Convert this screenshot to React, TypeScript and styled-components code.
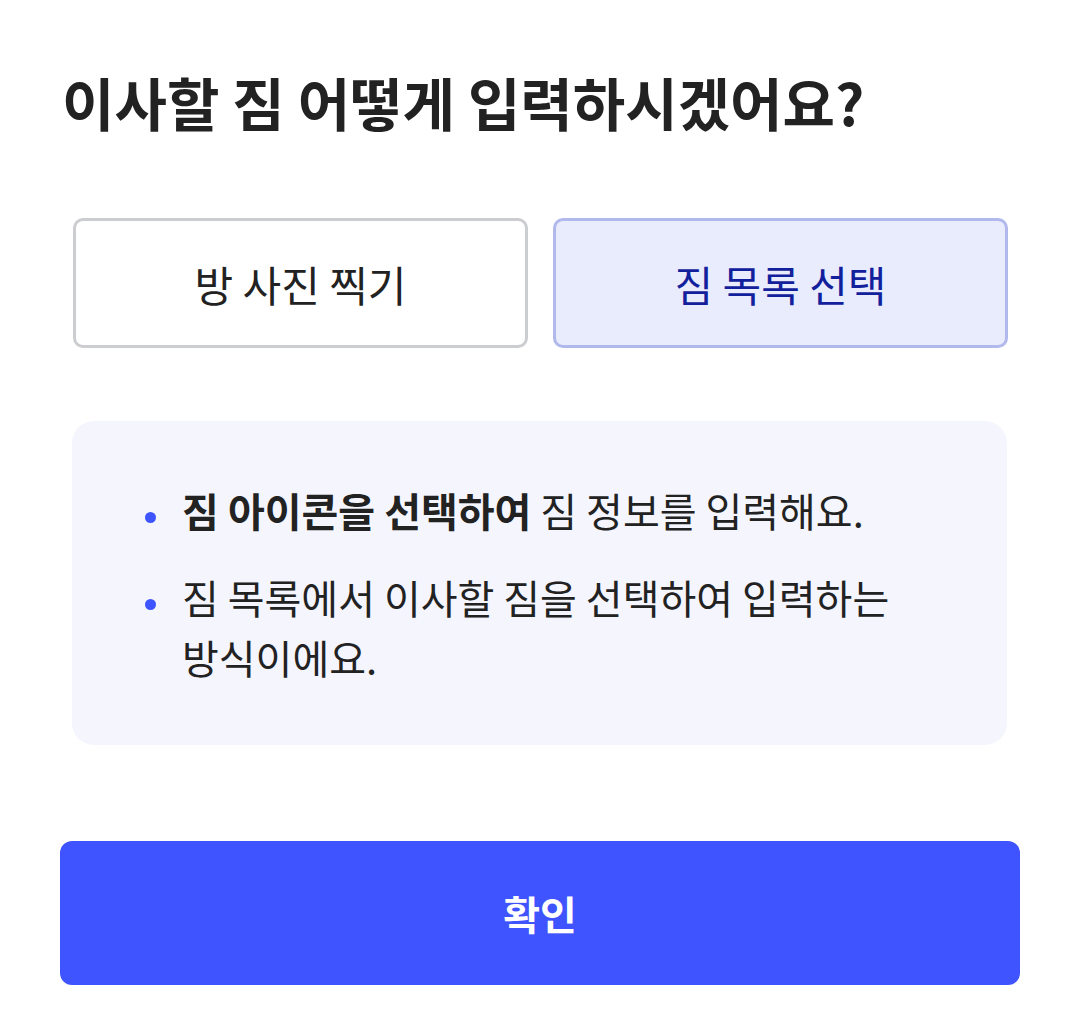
import { useState } from "react";
import styled, { createGlobalStyle } from "styled-components";

const GlobalStyle = createGlobalStyle`
    body {
        margin: 0;
        background: #ffffff;
        font-family: "Noto Sans CJK KR", "Noto Sans", sans-serif;
        color: #222222;
        word-break: keep-all;
    }
`

type Method = "photo" | "list";

export default function App() {
    const [method, setMethod] = useState<Method>("list");

    return (
        <>
            <GlobalStyle />
            <Sheet>
                <Title>이사할 짐 어떻게 입력하시겠어요?</Title>

                <OptionRow>
                    <OptionButton type="button" $active={method === "photo"} onClick={() => setMethod("photo")}>
                        방 사진 찍기
                    </OptionButton>
                    <OptionButton type="button" $active={method === "list"} onClick={() => setMethod("list")}>
                        짐 목록 선택
                    </OptionButton>
                </OptionRow>

                <InfoBox>
                    <InfoItem>
                        <Dot />
                        <p><strong>짐 아이콘을 선택하여</strong> 짐 정보를 입력해요.</p>
                    </InfoItem>
                    <InfoItem>
                        <Dot />
                        <p>짐 목록에서 이사할 짐을 선택하여 입력하는 방식이에요.</p>
                    </InfoItem>
                </InfoBox>

                <ConfirmButton type="button">확인</ConfirmButton>
            </Sheet>
        </>
    );
}

const Sheet = styled.div`
    display: flex;
    flex-direction: column;
    padding: 67px 60px 48px;
`
const Title = styled.h1`
    margin: 0 0 0 2px;
    font-size: 57px;
    line-height: 68px;
    font-weight: 700;
    color: #222222;
`
const OptionRow = styled.div`
    display: grid;
    grid-template-columns: 1fr 1fr;
    gap: 25px;
    margin: 83px 12px 0 13px;
`
const OptionButton = styled.button<{ $active: boolean }>`
    height: 130px;
    border-radius: 10px;
    border: 3px solid ${(p) => (p.$active ? "#b1b9ec" : "#cccdd0")};
    background: ${(p) => (p.$active ? "#e9ecfd" : "#ffffff")};
    color: ${(p) => (p.$active ? "#13209c" : "#222222")};
    font-family: inherit;
    font-size: 42px;
    font-weight: 400;
    cursor: pointer;
    padding: 0;
`
const InfoBox = styled.ul`
    list-style: none;
    margin: 73px 13px 0 12px;
    padding: 59px 70px 58px 73px;
    background: #f4f5fd;
    border-radius: 22px;
    display: flex;
    flex-direction: column;
    gap: 27px;
`
const InfoItem = styled.li`
    display: flex;
    align-items: flex-start;
    gap: 26px;
    p {
        margin: 0;
        font-size: 40px;
        line-height: 60px;
        color: #222222;
    }
    strong {
        font-weight: 700;
    }
`
const Dot = styled.span`
    flex: none;
    width: 11px;
    height: 11px;
    border-radius: 50%;
    background: #3e54fe;
    margin-top: 32px;
`
const ConfirmButton = styled.button`
    margin-top: 96px;
    height: 144px;
    border: none;
    border-radius: 12px;
    background: #3f54fe;
    color: #ffffff;
    font-family: inherit;
    font-size: 40px;
    font-weight: 700;
    cursor: pointer;
`
